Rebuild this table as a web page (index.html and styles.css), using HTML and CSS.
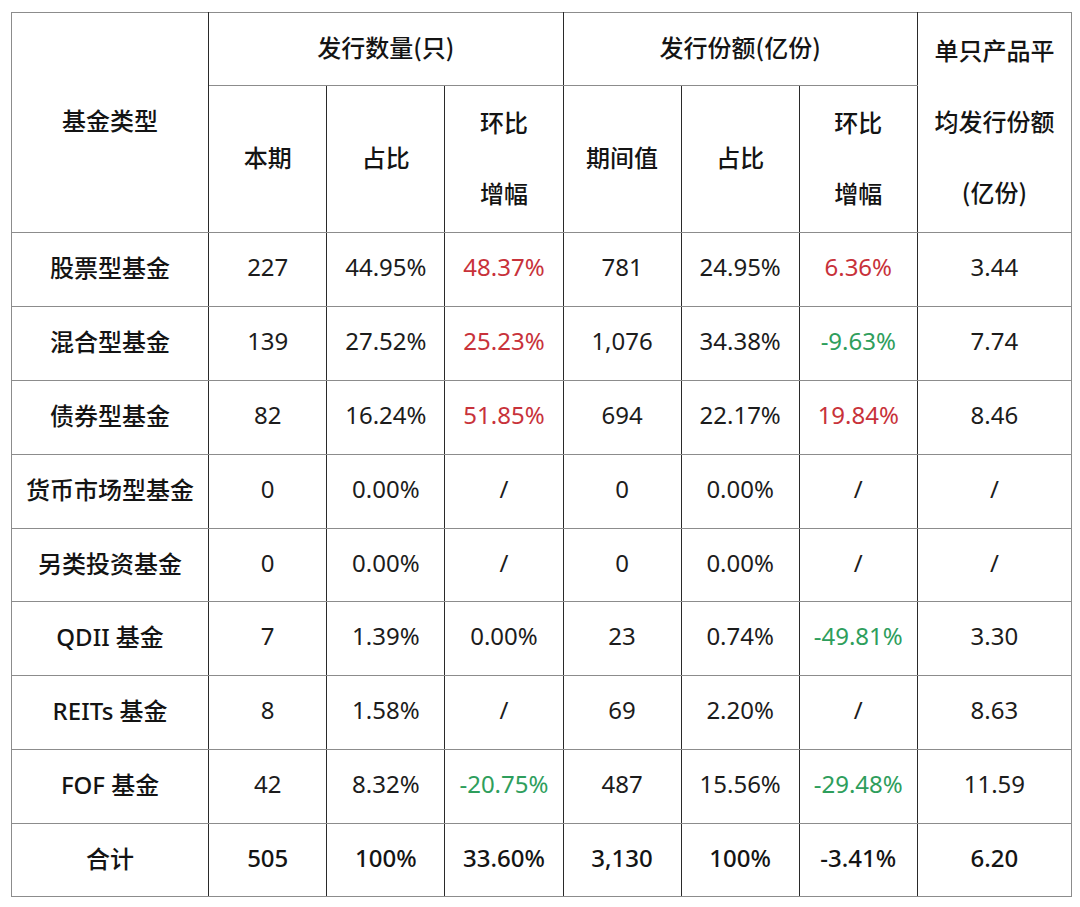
FILE: index.html
```html
<!DOCTYPE html>
<html lang="zh">
<head>
<meta charset="utf-8">
<title>基金发行统计</title>
<link rel="stylesheet" href="styles.css">
</head>
<body>
<table class="fund-table">
  <colgroup>
    <col class="c-type">
    <col class="c-n"><col class="c-n"><col class="c-n">
    <col class="c-n"><col class="c-n"><col class="c-n">
    <col class="c-avg">
  </colgroup>
  <thead>
    <tr class="h1">
      <th rowspan="2">基金类型</th>
      <th colspan="3">发行数量(只)</th>
      <th colspan="3">发行份额(亿份)</th>
      <th rowspan="2" class="multi">单只产品平<br>均发行份额<br>(亿份)</th>
    </tr>
    <tr class="h2">
      <th>本期</th>
      <th>占比</th>
      <th class="two">环比<br>增幅</th>
      <th>期间值</th>
      <th>占比</th>
      <th class="two">环比<br>增幅</th>
    </tr>
  </thead>
  <tbody>
    <tr><td class="name">股票型基金</td><td>227</td><td>44.95%</td><td class="up">48.37%</td><td>781</td><td>24.95%</td><td class="up">6.36%</td><td>3.44</td></tr>
    <tr><td class="name">混合型基金</td><td>139</td><td>27.52%</td><td class="up">25.23%</td><td>1,076</td><td>34.38%</td><td class="down">-9.63%</td><td>7.74</td></tr>
    <tr><td class="name">债券型基金</td><td>82</td><td>16.24%</td><td class="up">51.85%</td><td>694</td><td>22.17%</td><td class="up">19.84%</td><td>8.46</td></tr>
    <tr><td class="name">货币市场型基金</td><td>0</td><td>0.00%</td><td>/</td><td>0</td><td>0.00%</td><td>/</td><td>/</td></tr>
    <tr class="short"><td class="name">另类投资基金</td><td>0</td><td>0.00%</td><td>/</td><td>0</td><td>0.00%</td><td>/</td><td>/</td></tr>
    <tr><td class="name">QDII 基金</td><td>7</td><td>1.39%</td><td>0.00%</td><td>23</td><td>0.74%</td><td class="down">-49.81%</td><td>3.30</td></tr>
    <tr><td class="name">REITs 基金</td><td>8</td><td>1.58%</td><td>/</td><td>69</td><td>2.20%</td><td>/</td><td>8.63</td></tr>
    <tr><td class="name">FOF 基金</td><td>42</td><td>8.32%</td><td class="down">-20.75%</td><td>487</td><td>15.56%</td><td class="down">-29.48%</td><td>11.59</td></tr>
    <tr class="total short"><td class="name">合计</td><td>505</td><td>100%</td><td>33.60%</td><td>3,130</td><td>100%</td><td>-3.41%</td><td>6.20</td></tr>
  </tbody>
</table>
</body>
</html>
```

FILE: styles.css
```css
html, body {
  margin: 0;
  padding: 0;
  background: #ffffff;
}

body {
  padding: 12px 0 0 11px;
  font-family: "Noto Sans", "Noto Sans CJK SC", sans-serif;
  color: #1c1c1c;
}

.fund-table {
  border-collapse: collapse;
  table-layout: fixed;
  width: 1061px;
  font-size: 24px;
}

.c-type { width: 197px; }
.c-n { width: 118px; }
.c-avg { width: 154px; }

.fund-table th,
.fund-table td {
  padding: 0 0 6px 0;
  text-align: center;
  vertical-align: middle;
  border-top: 1px solid #8c8c8c;
  border-bottom: 1px solid #8c8c8c;
  border-left: 1px solid #2a2a2a;
  border-right: 1px solid #2a2a2a;
}

.fund-table tr > :first-child { border-left-color: #8c8c8c; }
.fund-table tr > :last-child { border-right-color: #8c8c8c; }

.fund-table th {
  font-weight: 500;
  font-family: "Noto Sans CJK SC", "Noto Sans", sans-serif;
  color: #141414;
}

.h1 { height: 73px; }
.h2 { height: 147px; }

.fund-table th.two,
.fund-table th.multi {
  line-height: 71px;
  padding-bottom: 4px;
}

.fund-table tbody tr { height: 74px; }
.fund-table tbody tr.short { height: 73px; }

.name {
  font-family: "Noto Sans", "Noto Sans CJK SC", sans-serif;
  font-weight: 500;
  color: #141414;
}

.up { color: #c8323a; }
.down { color: #2e9e5c; }

.total td { font-weight: 500; color: #141414; }
```
